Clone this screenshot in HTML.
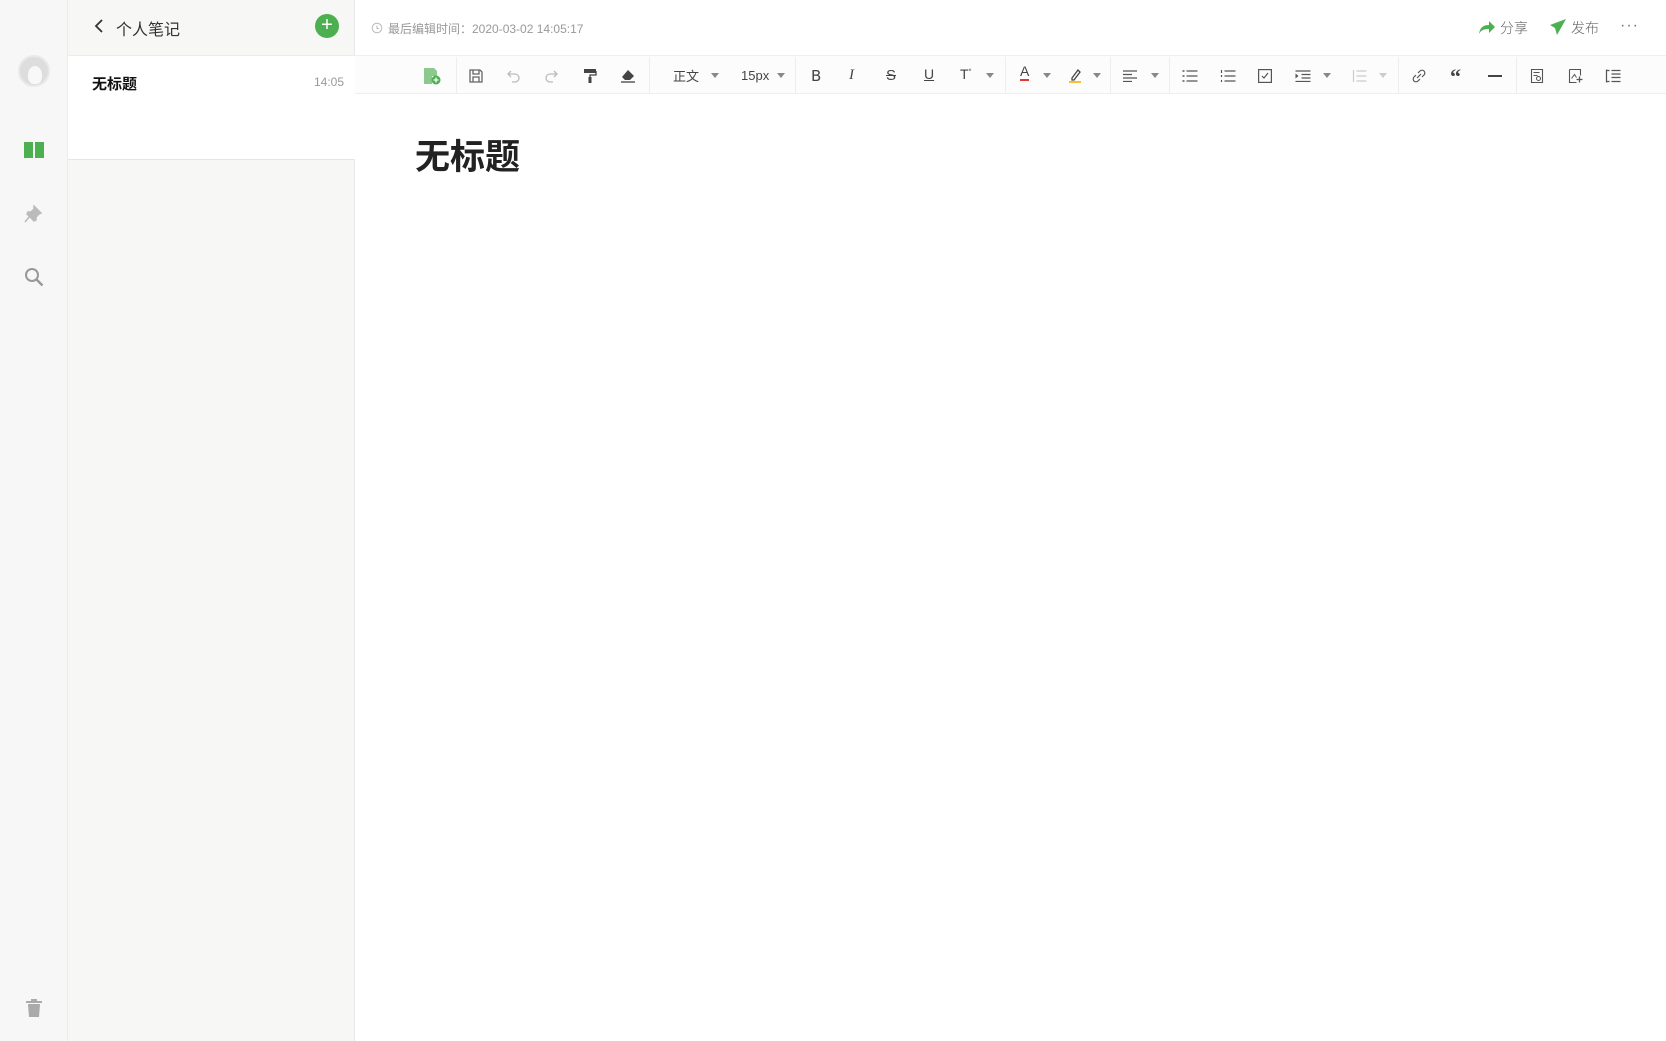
<!DOCTYPE html><html><head><meta charset="utf-8"><style>
*{margin:0;padding:0;box-sizing:border-box}
body{width:1666px;height:1041px;overflow:hidden;background:#fff;font-family:"Liberation Sans","Noto Sans CJK SC",sans-serif;position:relative;color:#333}
.a{position:absolute}
.ic{position:absolute;transform:translate(-50%,-50%)}
.sep{position:absolute;top:57px;width:1px;height:36px;background:#eee}
.car{position:absolute;top:73px;width:0;height:0;border-left:4px solid transparent;border-right:4px solid transparent;border-top:5px solid #888;transform:translateX(-50%)}
</style></head><body>
<div class="a" style="left:0;top:0;width:68px;height:1041px;background:#f7f7f7;border-right:1px solid #ececec"></div>
<div class="a" style="left:68px;top:0;width:287px;height:1041px;background:#f7f7f6;border-right:1px solid #e8e8e8"></div>
<div class="a" style="left:68px;top:55px;width:287px;height:105px;background:#fff;border-top:1px solid #ececec;border-bottom:1px solid #e6e6e6"></div>
<div class="a" style="left:355px;top:55px;width:1311px;height:39px;background:#fcfcfc;border-top:1px solid #eee;border-bottom:1px solid #eee"></div>
<div class="ic" style="left:34px;top:71px;width:32px;height:32px;border-radius:50%;background:#ddd;border:2px solid #e9e9e9"><div style="position:absolute;left:8px;top:9px;width:14px;height:18px;border-radius:50% 50% 40% 40%;background:#f8f8f8"></div></div>
<svg class="ic" style="left:34px;top:150px" width="20" height="18" viewBox="0 0 20 18"><rect x="0" y="1" width="9" height="16" fill="#4caf50"/><rect x="11" y="1" width="9" height="16" fill="#4caf50"/></svg>
<svg class="ic" style="left:33px;top:214px" width="18" height="18" viewBox="0 0 18 18"><path d="M10 1l7 7-2 1-3 3 0 3-2 1-7-7 1-2 3 0 3-3z M5 12l-4 5" fill="#bbb" stroke="#bbb" stroke-width="1.5"/></svg>
<svg class="ic" style="left:34px;top:277px" width="20" height="20" viewBox="0 0 20 20"><circle cx="8" cy="8" r="6" fill="none" stroke="#999" stroke-width="2"/><path d="M12.5 12.5l6 6" stroke="#999" stroke-width="2.4"/></svg>
<svg class="ic" style="left:34px;top:1008px" width="16" height="18" viewBox="0 0 16 18"><rect x="0" y="2" width="16" height="2" fill="#aaa"/><rect x="5" y="0" width="6" height="2" fill="#aaa"/><path d="M2 5h12l-1 13H3z" fill="#aaa"/></svg>
<svg class="ic" style="left:99px;top:26px" width="10" height="16" viewBox="0 0 10 16"><path d="M8 2L2 8l6 6" fill="none" stroke="#333" stroke-width="1.8"/></svg>
<div class="a" style="left:116px;top:16px;font-size:16px;color:#333">个人笔记</div>
<div class="ic" style="left:327px;top:26px;width:24px;height:24px;border-radius:50%;background:#4caf50;color:#fff;font-size:20px;line-height:23px;text-align:center">+</div>
<div class="a" style="left:92px;top:73px;font-size:15px;font-weight:bold;color:#111">无标题</div>
<div class="a" style="left:300px;top:75px;width:44px;text-align:right;font-size:12px;color:#999">14:05</div>
<svg class="ic" style="left:377px;top:28px" width="11" height="11" viewBox="0 0 11 11"><circle cx="5.5" cy="5.5" r="4.8" fill="none" stroke="#bbb"/><path d="M5.5 3v3h2" fill="none" stroke="#bbb"/></svg>
<div class="a" style="left:388px;top:20px;font-size:12px;color:#999">最后编辑时间：2020-03-02 14:05:17</div>
<svg class="ic" style="left:1487px;top:27px" width="18" height="16" viewBox="0 0 18 16"><path d="M1 15C2 8 6 6 11 6V2l6 6-6 6v-4C6 10 3 11 1 15z" fill="#4caf50"/></svg>
<div class="a" style="left:1500px;top:18px;font-size:14px;color:#666;font-weight:300">分享</div>
<svg class="ic" style="left:1558px;top:27px" width="16" height="16" viewBox="0 0 16 16"><path d="M16 0L0 6l5 3 2 7z" fill="#4caf50"/></svg>
<div class="a" style="left:1571px;top:18px;font-size:14px;color:#666;font-weight:300">发布</div>
<div class="a" style="left:1620px;top:17px;font-size:16px;color:#777;letter-spacing:1px">···</div>
<div class="sep" style="left:456px"></div><div class="sep" style="left:649px"></div><div class="sep" style="left:795px"></div><div class="sep" style="left:1005px"></div><div class="sep" style="left:1110px"></div><div class="sep" style="left:1169px"></div><div class="sep" style="left:1398px"></div><div class="sep" style="left:1516px"></div>
<svg class="ic" style="left:432px;top:76px" width="18" height="18" viewBox="0 0 18 18"><path d="M1 1h10l3 3v5H1z M1 9h8v8H1z" fill="#8bc98d"/><circle cx="13" cy="13" r="4.5" fill="#4caf50"/><path d="M13 10.5v5M10.5 13h5" stroke="#fff" stroke-width="1.3"/></svg>
<svg class="ic" style="left:476px;top:76px" width="14" height="14" viewBox="0 0 14 14"><path d="M1 1h10l2 2v10H1z M4 1v4h6V1 M4 13V8h6v5" fill="none" stroke="#666" stroke-width="1.3"/></svg>
<svg class="ic" style="left:514px;top:76px" width="16" height="14" viewBox="0 0 16 14"><path d="M5 2L2 5l3 3 M2 5h7a4 4 0 010 8H6" fill="none" stroke="#bbb" stroke-width="1.3"/></svg>
<svg class="ic" style="left:551px;top:76px" width="16" height="14" viewBox="0 0 16 14"><path d="M11 2l3 3-3 3 M14 5H7a4 4 0 000 8h3" fill="none" stroke="#bbb" stroke-width="1.3"/></svg>
<svg class="ic" style="left:590px;top:76px" width="14" height="16" viewBox="0 0 14 16"><rect x="1" y="1" width="12" height="4" fill="#444"/><path d="M13 3v4H7v2" fill="none" stroke="#444" stroke-width="1.3"/><rect x="5.5" y="9" width="3" height="6" fill="#444"/></svg>
<svg class="ic" style="left:628px;top:76px" width="16" height="14" viewBox="0 0 16 14"><path d="M8 1l6 6-4 4H5L2 8z" fill="#444"/><path d="M1 13h14" stroke="#444" stroke-width="1.3"/></svg>
<div class="a" style="left:673px;top:66px;font-size:13px;color:#444">正文</div><div class="car" style="left:715px"></div>
<div class="a" style="left:741px;top:68px;font-size:13px;color:#444">15px</div><div class="car" style="left:781px"></div>
<div class="a" style="left:811px;top:67px;font-size:15px;color:#444;font-family:'DejaVu Sans',sans-serif">B</div>
<div class="a" style="left:849px;top:67px;font-size:15px;color:#444;font-style:italic;font-family:'Liberation Serif',serif">I</div>
<div class="a" style="left:886px;top:67px;font-size:15px;color:#444;text-decoration:line-through">S</div>
<div class="a" style="left:924px;top:66px;font-size:14px;color:#444;text-decoration:underline">U</div>
<div class="a" style="left:960px;top:66px;font-size:14px;color:#444">T<sup style="font-size:7px">*</sup></div><div class="car" style="left:990px"></div>
<div class="a" style="left:1020px;top:64px;font-size:14px;color:#444;border-bottom:2px solid #e53935;line-height:15px">A</div><div class="car" style="left:1047px"></div>
<svg class="ic" style="left:1075px;top:76px" width="14" height="16" viewBox="0 0 14 16"><path d="M4 10l6-8 2 2-6 8H4z" fill="none" stroke="#444" stroke-width="1.3"/><rect x="1" y="13" width="12" height="2" fill="#fbc02d"/></svg><div class="car" style="left:1097px"></div>
<svg class="ic" style="left:1130px;top:76px" width="14" height="12" viewBox="0 0 14 12"><path d="M0 1h14M0 4.5h9M0 8h14M0 11.5h9" stroke="#555" stroke-width="1.2"/></svg><div class="car" style="left:1155px"></div>
<svg class="ic" style="left:1190px;top:76px" width="15" height="12" viewBox="0 0 15 12"><path d="M4 1h11M4 6h11M4 11h11" stroke="#555" stroke-width="1.2"/><path d="M0 1h2M0 6h2M0 11h2" stroke="#555" stroke-width="1.6"/></svg>
<svg class="ic" style="left:1228px;top:76px" width="15" height="12" viewBox="0 0 15 12"><path d="M4 1h11M4 6h11M4 11h11M1 0v3M1 5v2M1 10v2" stroke="#555" stroke-width="1.2"/></svg>
<svg class="ic" style="left:1265px;top:76px" width="14" height="14" viewBox="0 0 14 14"><rect x="0.6" y="0.6" width="12.8" height="12.8" fill="none" stroke="#555" stroke-width="1.2"/><path d="M4 7l2 2 4-5" fill="none" stroke="#555" stroke-width="1.2"/></svg>
<svg class="ic" style="left:1303px;top:76px" width="15" height="12" viewBox="0 0 15 12"><path d="M0 1h15M6 4.5h9M6 8h9M0 11.5h15" stroke="#555" stroke-width="1.2"/><path d="M0 3.5l3 2.5-3 2.5z" fill="#555"/></svg><div class="car" style="left:1327px"></div>
<svg class="ic" style="left:1359px;top:76px" width="15" height="12" viewBox="0 0 15 12"><path d="M5 1h10M5 6h10M5 11h10M2 0v12" stroke="#ccc" stroke-width="1.2"/></svg><div class="car" style="left:1383px;border-top-color:#ccc"></div>
<svg class="ic" style="left:1419px;top:76px" width="14" height="14" viewBox="0 0 14 14"><path d="M6 4l2-2a2.8 2.8 0 014 4l-2 2M8 10l-2 2a2.8 2.8 0 01-4-4l2-2M5 9l4-4" fill="none" stroke="#555" stroke-width="1.2"/></svg>
<div class="a" style="left:1450px;top:66px;font-size:22px;font-weight:bold;color:#444;font-family:'Liberation Serif',serif;line-height:22px">“</div>
<div class="a" style="left:1488px;top:75px;width:14px;height:1.5px;background:#444"></div>
<svg class="ic" style="left:1537px;top:76px" width="13" height="15" viewBox="0 0 13 15"><path d="M1 1h11v13H1z M3 4h6M3 7h4" fill="none" stroke="#555" stroke-width="1.1"/><circle cx="8" cy="10" r="2" fill="none" stroke="#555"/></svg>
<svg class="ic" style="left:1576px;top:76px" width="15" height="15" viewBox="0 0 15 15"><path d="M1 1h11v6M1 1v13h7" fill="none" stroke="#555" stroke-width="1.1"/><path d="M3 10l3-4 2 3" fill="none" stroke="#555"/><path d="M11 8v6M8 11h6" stroke="#555" stroke-width="1.3"/></svg>
<svg class="ic" style="left:1613px;top:76px" width="15" height="13" viewBox="0 0 15 13"><path d="M1 0v13M1 1h3M1 12h3M6 1h9M6 4.5h9M6 8h9M6 12h9" stroke="#555" stroke-width="1.2"/></svg>
<div class="a" style="left:415px;top:129px;font-size:35px;font-weight:bold;color:#222">无标题</div>
</body></html>
